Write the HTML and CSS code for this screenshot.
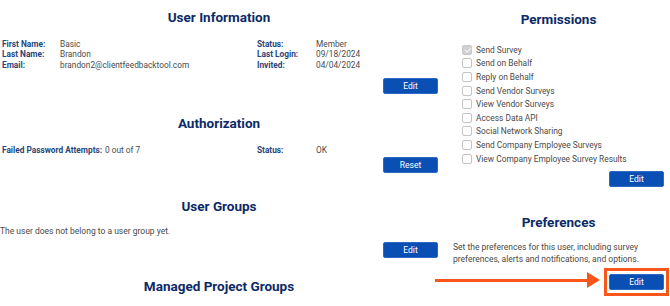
FILE: index.html
```html
<!DOCTYPE html>
<html lang="en">
<head>
    <meta charset="UTF-8">
    <meta name="viewport" content="width=device-width, initial-scale=1.0">
    <title>User Details</title>
    <link rel="stylesheet" href="styles.css">
</head>
<body>
    <div class="page">
        <div class="col-main">
            <h2 class="title title-user">User Information</h2>
            <div class="info info-user">
                <span class="label">First Name:</span><span class="value">Basic</span>
                <span class="label">Status:</span><span class="value">Member</span>
                <span class="label">Last Name:</span><span class="value">Brandon</span>
                <span class="label">Last Login:</span><span class="value">09/18/2024</span>
                <span class="label">Email:</span><span class="value">brandon2@clientfeedbacktool.com</span>
                <span class="label">Invited:</span><span class="value">04/04/2024</span>
            </div>
            <div class="actions actions-user"><button class="btn">Edit</button></div>

            <h2 class="title title-auth">Authorization</h2>
            <div class="info info-auth">
                <span class="label">Failed Password Attempts:</span><span class="value">0 out of 7</span>
                <span class="label">Status:</span><span class="value">OK</span>
            </div>
            <div class="actions actions-auth"><button class="btn">Reset</button></div>

            <h2 class="title title-groups">User Groups</h2>
            <p class="note">The user does not belong to a user group yet.</p>
            <div class="actions actions-groups"><button class="btn">Edit</button></div>

            <h2 class="title title-managed">Managed Project Groups</h2>
        </div>

        <div class="col-side">
            <h2 class="title title-perms">Permissions</h2>
            <ul class="perms">
                <li><input type="checkbox" checked disabled> Send Survey</li>
                <li><input type="checkbox"> Send on Behalf</li>
                <li><input type="checkbox"> Reply on Behalf</li>
                <li><input type="checkbox"> Send Vendor Surveys</li>
                <li><input type="checkbox"> View Vendor Surveys</li>
                <li><input type="checkbox"> Access Data API</li>
                <li><input type="checkbox"> Social Network Sharing</li>
                <li><input type="checkbox"> Send Company Employee Surveys</li>
                <li><input type="checkbox"> View Company Employee Survey Results</li>
            </ul>
            <div class="actions actions-perms"><button class="btn">Edit</button></div>

            <h2 class="title title-prefs">Preferences</h2>
            <p class="note note-prefs">Set the preferences for this user, including survey preferences, alerts and notifications, and options.</p>
            <div class="actions actions-prefs">
                <span class="highlight"><button class="btn">Edit</button></span>
            </div>
        </div>
    </div>

    <!-- callout arrow pointing at the preferences button -->
    <div class="arrow"><span class="arrow-line"></span><span class="arrow-head"></span></div>
</body>
</html>
```

FILE: styles.css
```css
body {
    font-family: Roboto, "Liberation Sans", sans-serif;
    background-color: #fff;
    color: #4a4a4a;
    margin: 0;
    padding: 0;
}
.page {
    display: grid;
    grid-template-columns: 444px 1fr;
    column-gap: 9px;
}
.col-main, .col-side {
    padding-right: 6px;
}
.title {
    font-size: 13.5px;
    line-height: 16px;
    font-weight: 700;
    color: #0c2a66;
    text-align: center;
    margin: 0;
}
.title-user { margin-top: 9px; }
.title-auth { margin-top: 21px; }
.title-groups { margin-top: 25px; }
.title-managed { margin-top: 20px; }
.title-perms { margin-top: 11px; }
.title-prefs { margin-top: 27px; }

.info {
    display: grid;
    font-size: 8.3px;
    line-height: 10.3px;
    padding-left: 2px;
}
.info-user {
    grid-template-columns: 58px 197px 59px auto;
    margin-top: 14px;
}
.info-auth {
    grid-template-columns: 103px 152px 59px auto;
    margin-top: 14px;
}
.label {
    font-weight: 700;
    color: #27457a;
}
.value {
    color: #4a4a4a;
}
.note {
    font-size: 8.5px;
    line-height: 12px;
    margin: 11px 0 0;
    color: #4a4a4a;
}
.note-prefs {
    margin-top: 11px;
}
.actions {
    display: flex;
    justify-content: flex-end;
}
.actions-user { margin-top: 8px; }
.actions-auth { margin-top: 2px; }
.actions-groups { margin-top: 5px; }
.actions-perms { margin-top: 6px; }
.actions-prefs { margin-top: 3px; }

.btn {
    width: 55px;
    height: 16px;
    padding: 0;
    border: 1px solid #2d68c4;
    border-radius: 2px;
    background-color: #0a4fb3;
    color: #fff;
    font-family: Roboto, "Liberation Sans", sans-serif;
    font-size: 8.5px;
    cursor: pointer;
}
.highlight {
    display: inline-flex;
    border: 3px solid #f9561c;
    padding: 3px 2px;
    margin-right: -5px;
}

.perms {
    list-style: none;
    margin: 16px 0 0;
    padding: 0 0 0 9px;
}
.perms li {
    display: flex;
    align-items: center;
    height: 13.6px;
    font-size: 8.4px;
    color: #4a4a4a;
}
.perms input {
    appearance: none;
    width: 10px;
    height: 10px;
    margin: 0 4px 0 0;
    border: 1px solid #c4c4c4;
    border-radius: 2px;
    background-color: #fff;
}
.perms input:checked {
    background-color: #d0d0d0;
    border-color: #c8c8c8;
    position: relative;
}
.perms input:checked::after {
    content: "";
    position: absolute;
    left: 2.5px;
    top: 0.5px;
    width: 2.5px;
    height: 5px;
    border: solid #f4f4f4;
    border-width: 0 1.3px 1.3px 0;
    transform: rotate(45deg);
}

.arrow {
    position: absolute;
    left: 435px;
    top: 272px;
    display: flex;
    align-items: center;
    height: 16px;
}
.arrow-line {
    width: 155px;
    height: 3px;
    background-color: #f9561c;
}
.arrow-head {
    width: 0;
    height: 0;
    border-top: 8px solid transparent;
    border-bottom: 8px solid transparent;
    border-left: 13px solid #f9561c;
    margin-left: -3px;
}
```
